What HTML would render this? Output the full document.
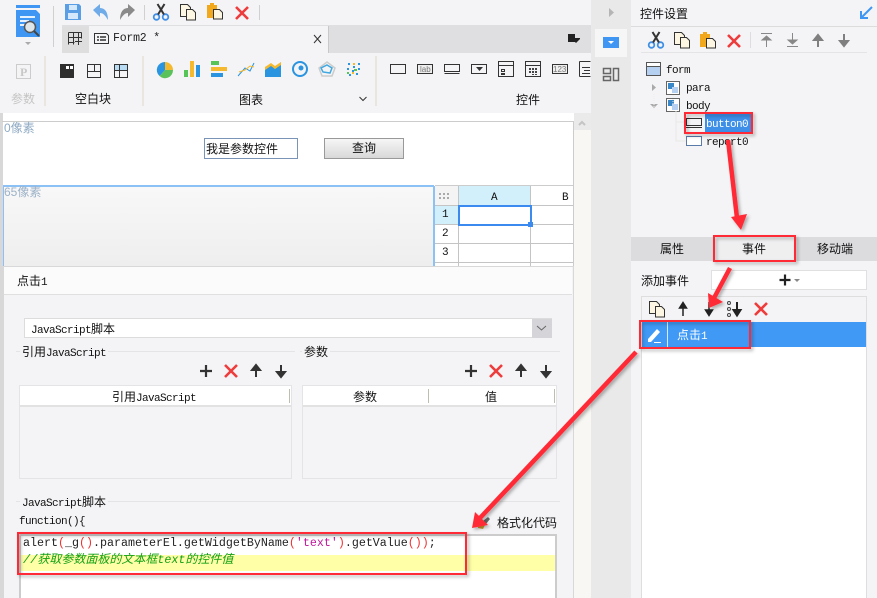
<!DOCTYPE html>
<html lang="zh"><head><meta charset="utf-8"><title>Form2</title>
<style>
html,body{margin:0;padding:0;background:#f4f4f6}
#p{position:relative;width:877px;height:598px;overflow:hidden;background:#f4f4f6;font:12px/16px "Liberation Sans","Noto Sans CJK SC",sans-serif;color:#111}
#p div{position:absolute}
.t{white-space:nowrap}
.m{font-family:"Liberation Mono","Noto Sans CJK SC",monospace;font-size:11px;letter-spacing:-.6px}
svg{position:absolute;left:0;top:0}
</style></head><body><div id="p">

<!-- backgrounds -->
<div style="left:62px;top:25px;width:529px;height:28px;background:#dfdfe1"></div>
<div style="left:62px;top:27px;width:27px;height:26px;background:#dedede"></div>
<div style="left:89px;top:26px;width:239px;height:27px;background:#f4f4f6;border-right:1px solid #c8c8c8"></div>
<div style="left:0;top:113px;width:574px;height:485px;background:#fff"></div>
<div style="left:0;top:113px;width:3px;height:485px;background:#d8d8d8"></div>
<div style="left:2px;top:121px;width:572px;height:1px;background:#ccc"></div>
<div style="left:573px;top:121px;width:1px;height:477px;background:#ccc"></div>
<div style="left:574px;top:113px;width:17px;height:485px;background:#f8f7f3"></div>
<div style="left:574px;top:113px;width:17px;height:17px;background:#eaeaea"></div>
<div style="left:591px;top:0;width:40px;height:598px;background:#e9e9e9"></div>
<div style="left:595px;top:29px;width:32px;height:28px;background:#f6f6f6"></div>
<div style="left:603px;top:37px;width:16px;height:11px;background:#3f97f3"></div>

<!-- canvas -->
<div style="left:3px;top:185px;width:431px;height:2px;background:#8cc1f6"></div>
<div style="left:3px;top:187px;width:1px;height:79px;background:#8cc1f6"></div>
<div style="left:4px;top:187px;width:429px;height:79px;background:linear-gradient(#f8f8f8,#eee)"></div>
<div style="left:433px;top:186px;width:2px;height:80px;background:#8cc1f6"></div>
<div class="t" style="left:4px;top:120px;color:#8faac4">0像素</div>
<div class="t" style="left:4px;top:184px;color:#9db2c8">65像素</div>
<div style="left:204px;top:138px;width:92px;height:19px;border:1px solid #7a94b8;background:#fff"></div>
<div class="t" style="left:206px;top:141px">我是参数控件</div>
<div style="left:324px;top:138px;width:78px;height:19px;border:1px solid #999;background:linear-gradient(#f6f6f6,#d8d8d8)"></div>
<div class="t" style="left:352px;top:140px">查询</div>

<!-- grid -->
<div style="left:435px;top:186px;width:138px;height:80px;background:#fff"></div>
<div style="left:435px;top:186px;width:23px;height:19px;background:#f4f4f5"></div>
<div style="left:458px;top:186px;width:72px;height:19px;background:#d2f0fb"></div>
<div style="left:435px;top:206px;width:23px;height:18px;background:#d2f0fb"></div>
<div style="left:435px;top:205px;width:138px;height:1px;background:#c4c4c4"></div>
<div style="left:435px;top:224px;width:138px;height:1px;background:#c4c4c4"></div>
<div style="left:435px;top:243px;width:138px;height:1px;background:#c4c4c4"></div>
<div style="left:435px;top:262px;width:138px;height:1px;background:#c4c4c4"></div>
<div style="left:435px;top:185px;width:138px;height:1px;background:#ccc"></div>
<div style="left:458px;top:186px;width:1px;height:80px;background:#c4c4c4"></div>
<div style="left:530px;top:186px;width:1px;height:80px;background:#c4c4c4"></div>
<div style="left:458px;top:205px;width:70px;height:17px;border:2px solid #3a8af0"></div>
<div style="left:528px;top:222px;width:5px;height:5px;background:#3a8af0"></div>
<div class="t m" style="left:491px;top:190px">A</div>
<div class="t m" style="left:562px;top:190px">B</div>
<div class="t m" style="left:442px;top:207px">1</div>
<div class="t m" style="left:442px;top:226px">2</div>
<div class="t m" style="left:442px;top:245px">3</div>

<!-- dialog -->
<div style="left:3px;top:266px;width:569px;height:332px;background:#f4f4f6;border:1px solid #d8d8d8;border-width:1px 1px 0 1px"></div>
<div style="left:4px;top:267px;width:568px;height:27px;background:#fbfbfb;border-bottom:1px solid #e0e0e0"></div>
<div class="t" style="left:17px;top:273px">点击<span class="m">1</span></div>
<div style="left:24px;top:318px;width:526px;height:18px;background:#fff;border:1px solid #dcdcdc"></div>
<div style="left:532px;top:319px;width:20px;height:19px;background:#d5d5d9"></div>
<div class="t" style="left:31px;top:321px"><span class="m">JavaScript</span>脚本</div>
<div style="left:16px;top:351px;width:279px;height:1px;background:#e4e4e6"></div>
<div style="left:300px;top:351px;width:260px;height:1px;background:#e4e4e6"></div>
<div class="t" style="left:20px;top:344px;background:#f4f4f6;padding:0 2px">引用<span class="m">JavaScript</span></div>
<div class="t" style="left:302px;top:344px;background:#f4f4f6;padding:0 2px">参数</div>

<div style="left:19px;top:385px;width:271px;height:92px;border:1px solid #e4e4e6"></div>
<div style="left:20px;top:386px;width:271px;height:19px;background:#fff"></div>
<div style="left:20px;top:405px;width:271px;height:2px;background:#e2e2e2"></div>
<div style="left:289px;top:389px;width:1px;height:14px;background:#bdbdb0"></div>
<div class="t" style="left:112px;top:389px">引用<span class="m">JavaScript</span></div>
<div style="left:302px;top:385px;width:253px;height:92px;border:1px solid #e4e4e6"></div>
<div style="left:303px;top:386px;width:253px;height:19px;background:#fff"></div>
<div style="left:303px;top:405px;width:253px;height:2px;background:#e2e2e2"></div>
<div style="left:428px;top:389px;width:1px;height:14px;background:#bdbdb0"></div>
<div style="left:554px;top:389px;width:1px;height:14px;background:#bdbdb0"></div>
<div class="t" style="left:353px;top:389px">参数</div>
<div class="t" style="left:485px;top:389px">值</div>

<div style="left:16px;top:501px;width:544px;height:1px;background:#e4e4e6"></div>
<div class="t" style="left:20px;top:494px;background:#f4f4f6;padding:0 2px"><span class="m">JavaScript</span>脚本</div>
<div class="t m" style="left:19px;top:514px">function(){</div>
<div class="t" style="left:497px;top:515px">格式化代码</div>
<div style="left:19px;top:534px;width:534px;height:70px;border:2px solid #ccc;background:#fff"></div>
<div style="left:21px;top:555px;width:534px;height:16px;background:#ffffa8"></div>
<div class="t" style="left:23px;top:536px;font:11.67px/15px 'Liberation Mono',monospace;color:#222">alert<span style="color:#e33">(</span>_g<span style="color:#e33">()</span>.parameterEl.getWidgetByName<span style="color:#e33">(</span><span style="color:#c0189c">'text'</span><span style="color:#e33">)</span>.getValue<span style="color:#e33">())</span>;</div>
<div class="t" style="left:23px;top:552px;color:#12a012;font-style:italic;font-family:'Liberation Mono','Noto Sans CJK SC',monospace;font-size:12px">//获取参数面板的文本框<span style="font-size:11.67px">text</span>的控件值</div>

<!-- top ribbon labels -->
<div class="t" style="left:113px;top:31px;font:11.500px/16px 'Liberation Mono',monospace;letter-spacing:-.2px;color:#222">Form2 *</div>
<div class="t" style="left:11px;top:91px;color:#c4c4c4">参数</div>
<div class="t" style="left:75px;top:91px">空白块</div>
<div class="t" style="left:239px;top:92px">图表</div>
<div class="t" style="left:516px;top:92px">控件</div>

<!-- right panel -->
<div class="t" style="left:640px;top:6px">控件设置</div>
<div style="left:631px;top:26px;width:246px;height:1px;background:#dcdcdc"></div>
<div style="left:641px;top:52px;width:226px;height:1px;background:#e4e4e6"></div>
<div style="left:705px;top:114px;width:46px;height:18px;background:#3d8fe8"></div>
<div class="t m" style="left:666px;top:63px">form</div>
<div class="t m" style="left:686px;top:81px">para</div>
<div class="t m" style="left:686px;top:99px">body</div>
<div class="t m" style="left:706px;top:117px;color:#fff">button0</div>
<div class="t m" style="left:706px;top:135px">report0</div>

<div style="left:631px;top:237px;width:246px;height:24px;background:#dcdcde"></div>
<div style="left:714px;top:236px;width:81px;height:25px;background:#efeff0"></div>
<div class="t" style="left:660px;top:241px">属性</div>
<div class="t" style="left:742px;top:241px">事件</div>
<div class="t" style="left:817px;top:241px">移动端</div>
<div class="t" style="left:641px;top:273px">添加事件</div>
<div style="left:711px;top:270px;width:154px;height:18px;background:#fff;border:1px solid #e0e0e0"></div>
<div style="left:641px;top:296px;width:224px;height:302px;background:#fff;border:1px solid #dedede"></div>
<div style="left:642px;top:297px;width:224px;height:25px;background:#f4f4f6"></div>
<div style="left:642px;top:322px;width:224px;height:25px;background:#4099f5"></div>
<div style="left:667px;top:322px;width:1px;height:25px;background:#d6e9fd"></div>
<div class="t" style="left:677px;top:327px;color:#fff">点击<span class="m">1</span></div>

<!-- icons -->
<svg width="877" height="598" viewBox="0 0 877 598" fill="none">
<defs>
<g id="cut"><circle cx="3.5" cy="13" r="2.800" stroke="#3f8fe6" stroke-width="1.800"/><circle cx="12.5" cy="13" r="2.800" stroke="#3f8fe6" stroke-width="1.800"/><path d="M5 10.500L11.500 0M11 10.500L4.500 0" stroke="#333" stroke-width="2"/></g>
<g id="copy"><path d="M.5.500h7l3 3v9h-10z" fill="#fdf6e3" stroke="#333"/><path d="M6.500 5.500h6l3 3v7.500h-9z" fill="#fdf6e3" stroke="#333"/></g>
<g id="paste"><path d="M0 2h10v13H0z" fill="#f2a81d"/><path d="M3 0h4v3H3z" fill="#f2a81d"/><path d="M6.500 6.500h6l3 3v6.500h-9z" fill="#fdf6e3" stroke="#333"/></g>
<path id="x" d="M1 1L13 13M13 1L1 13" stroke="#ee3c3c" stroke-width="2.600"/>
<path id="up" d="M5 13V4M1 6L5 1L9 6z" stroke="#333" stroke-width="2" fill="#333"/>
<path id="dn" d="M5 0V9M1 7L5 12L9 7z" stroke="#333" stroke-width="2" fill="#333"/>
<path id="plus" d="M0 6H12M6 0V12" stroke="#333" stroke-width="2.200"/>
<g id="cb"><rect x=".5" y=".5" width="13" height="13" stroke="#666" fill="#fff"/><rect x="2" y="2" width="6" height="6" fill="#3a87c8"/><rect x="6" y="6" width="6" height="6" fill="#b5d0f0"/></g>
</defs>

<!-- logo -->
<path d="M16 5H40V8H16z" fill="#3f97f3"/><path d="M16 10H36L40 14V37H16z" fill="#3f97f3"/>
<path d="M20 17h15M20 21h9M20 25h5" stroke="#e6f1ff" stroke-width="2"/>
<circle cx="30" cy="27" r="5.500" fill="#dfe6ea" stroke="#555" stroke-width="1.500"/><path d="M34 31L39 36" stroke="#444" stroke-width="2"/>
<path d="M25 42h6l-3 3z" fill="#aaa"/>
<path d="M53.500 6V47M144.500 5V20M259.500 5V20" stroke="#d0d0d0"/>
<!-- save -->
<path d="M65 4H79L81 6V20H65z" fill="#5a9fe6"/><path d="M69 5h8v5h-8zM68 13h10v6H68z" fill="#d6e8fb"/>
<!-- undo / redo -->
<path d="M93 10L100 4V8C105 8 108 12 108 20C105 15 103 13 100 13V17z" fill="#6fabe8"/>
<path d="M135 10L128 4V8C123 8 120 12 120 20C123 15 125 13 128 13V17z" fill="#8a8a8a"/>
<use href="#cut" x="153" y="4"/><use href="#copy" x="180" y="4"/><use href="#paste" x="207" y="3"/><use href="#x" x="235" y="6"/>
<!-- tab icons -->
<path d="M68.500 32.500h13M68.500 37.500h13M68.500 42.500h6M68.500 32.500v12M73.500 32.500v12M78.500 32.500v6M81.500 32.500v6M75 41.500h7M78.500 38v7" stroke="#333"/>
<path d="M94.500 33.500h12l2 2v8h-14z" fill="#f4f4f6" stroke="#333"/><path d="M97 37h2M100 37h6M97 40h2M100 40h6" stroke="#333" stroke-width="1.500"/>
<path d="M314 35L321 43M321 35L314 43" stroke="#333"/>
<path d="M568 34h7v4h5v1h-5v3h-7z" fill="#222"/><path d="M572 39h8l-4 4z" fill="#222"/>
<!-- ribbon separators -->
<path d="M45 56V106M143 56V106M376 56V106" stroke="#e8e6df" stroke-width="2"/>
<!-- P -->
<rect x="16.500" y="64.500" width="14" height="14" stroke="#ccc" fill="#f4f4f6"/><text x="20" y="76" font-family="Liberation Serif" font-weight="bold" font-size="12" fill="#c8c8c8">P</text>
<!-- blocks -->
<rect x="60" y="64" width="14" height="14" fill="#2e2e2e"/><path d="M66 66h3v3h-3zM70 66h3v3h-3z" fill="#fff"/>
<path d="M87.500 64.500h13v13h-13zM87.500 71.500h13M94.500 64.500v7" stroke="#333"/>
<rect x="115" y="65" width="13" height="5" fill="#b8dcf4"/><path d="M114.500 64.500h13v13h-13zM114.500 70.500h13M119.500 64.500v13" stroke="#333"/>
<!-- charts -->
<path d="M165 62a8 8 0 0 1 8 8h-8z" fill="#f4b92e"/><path d="M165 70h8a8 8 0 0 1-13.500 6z" fill="#5bc15b"/><path d="M165 62v8l-5.500 6A8 8 0 0 1 165 62z" fill="#2a94e0"/>
<path d="M184 70h4v7h-4z" fill="#57c457"/><path d="M190 61h4v16h-4z" fill="#f4b92e"/><path d="M196 65h4v12h-4z" fill="#2a94e0"/>
<path d="M211 61h8v4h-8z" fill="#57c457"/><path d="M211 67h16v4h-16z" fill="#f4b92e"/><path d="M211 73h12v4h-12z" fill="#2a94e0"/>
<path d="M238 76L245 68L250 71L254 63" stroke="#2a94e0"/><path d="M239 72L245 70L250 66L254 67" stroke="#f4b92e"/>
<path d="M265 67L271 65L275 69L281 62V77H265z" fill="#2a94e0"/><path d="M265 67L271 63L275 66L281 62V65L275 69L271 66L265 70z" fill="#f4b92e"/>
<circle cx="300" cy="69" r="7" stroke="#2a94e0" stroke-width="2"/><circle cx="301" cy="68" r="2.500" fill="#2a94e0"/>
<path d="M327 62L335 68L332 76H322L319 68z" stroke="#ccc" stroke-width="1.500"/><path d="M327 65L332 68L330 73L323 72L321 68z" stroke="#41a8e0" stroke-width="1.500"/>
<path d="M348 63h2v2h-2zM353 66h2v2h-2zM358 63h2v2h-2zM347 68h2v2h-2zM358 68h2v2h-2zM349 74h2v2h-2zM356 73h2v2h-2zM352 70h2v2h-2z" fill="#2a94e0"/>
<path d="M353 63h2v2h-2zM352 72h2v2h-2z" fill="#f4b92e"/><path d="M354 69h3v2h-3zM347 72h2v2h-2z" fill="#57c457"/>
<path d="M359.500 97l3.500 3.500 3.500-3.500" stroke="#333"/>
<!-- widgets -->
<g stroke="#333">
<rect x="390.500" y="64.500" width="15" height="9"/>
<rect x="417.500" y="64.500" width="15" height="9" fill="#eee"/>
<path d="M444.500 64.500h15v7h-15zM444.500 73.500h15"/>
<rect x="471.500" y="64.500" width="15" height="9"/>
<path d="M498.500 61.500h15v15h-15zM498.500 65.500h15M501.500 69.500h3v2h-3zM501.500 73.500h3v1h-3z"/>
<path d="M525.500 61.500h15v15h-15zM525.500 65.500h15"/>
<rect x="552.500" y="64.500" width="15" height="9" fill="#eee"/>
<path d="M579.500 61.500h11M579.500 76.500h11M579.500 61.500v15M582 67.500h8M584 70.500h6M582 73.500h8"/>
</g>
<path d="M476 67h7l-3.500 4z" fill="#333"/>
<path d="M529 68h2v2h-2zM532 68h2v2h-2zM535 68h2v2h-2zM529 71h2v2h-2zM532 71h2v2h-2zM535 71h2v2h-2zM532 74h2v1h-2zM535 74h2v1h-2z" fill="#444"/>
<text x="420" y="72" font-family="Liberation Sans" font-size="8" fill="#777">lab</text>
<text x="553" y="72" font-family="Liberation Sans" font-size="8" fill="#777">123</text>
<!-- grid corner -->
<path d="M439 193h2v2h-2zM443 193h2v2h-2zM447 193h2v2h-2zM439 197h2v2h-2zM443 197h2v2h-2zM447 197h2v2h-2z" fill="#aaa"/>
<!-- sidebar -->
<path d="M609 8l5 4.500-5 4.500z" fill="#b5b5b5"/><path d="M608 41h6l-3 3z" fill="#fff"/>
<path d="M603.500 68.500h7v5h-7zM603.500 76.500h7v4h-7zM613.500 68.500h5v12h-5z" stroke="#666" stroke-width="1.500"/>
<!-- scroll arrow -->
<path d="M579 125l3-3 3 3" stroke="#c4c4c4" stroke-width="2"/>
<!-- right top -->
<path d="M872 7L862 17M861 11V18H868" stroke="#3f97f3" stroke-width="2"/>
<use href="#cut" x="648" y="32"/><use href="#copy" x="674" y="32"/><use href="#paste" x="700" y="32"/><use href="#x" x="727" y="34"/>
<path d="M750.500 32V48" stroke="#ddd"/>
<path d="M761 33.500h11M766.500 47V38M762 40l4.500-4 4.500 4z" stroke="#888" fill="#888"/>
<path d="M787 46.500h11M792.500 33V42M788 40l4.500 4 4.500-4z" stroke="#888" fill="#888"/>
<use href="#up" x="813" y="34" opacity=".6"/><use href="#dn" x="839" y="34" opacity=".6"/>
<!-- tree -->
<rect x="646.500" y="62.500" width="14" height="13" stroke="#555" fill="#fff"/><rect x="647" y="67" width="13" height="8" fill="#b5d0f0"/><path d="M647 66.500h13" stroke="#555"/>
<use href="#cb" x="666" y="81"/><use href="#cb" x="666" y="98"/>
<path d="M652 84l4 3.500-4 3.500z" fill="#aaa"/><path d="M650 104h8l-4 4z" fill="#aaa"/>
<path d="M673 95V105M654 94V110" stroke="#eee" stroke-dasharray="1 1"/>
<path d="M676 111v30h10M676 122h10" stroke="#e8e8e8"/>
<path d="M686.500 118.500h15v7h-15zM686 127.500h16" stroke="#333"/>
<rect x="686.500" y="136.500" width="15" height="9" stroke="#5a7ba8" fill="#fff"/>
<!-- dialog icons -->
<path d="M537 326l4.500 4 4.500-4" stroke="#666"/>
<use href="#plus" x="200" y="365"/><use href="#x" x="224" y="364"/><use href="#up" x="251" y="364"/><use href="#dn" x="276" y="365"/>
<use href="#plus" x="465" y="365"/><use href="#x" x="489" y="364"/><use href="#up" x="516" y="364"/><use href="#dn" x="541" y="365"/>
<!-- brush -->
<path d="M483 521l5-4 2 2-4 5z" fill="#666"/><path d="M478 523l5-2 2 4-2 4-5-1z" fill="#d99a2b"/>
<!-- right list icons -->
<path d="M785 274.500v11M779.500 280h11" stroke="#222" stroke-width="2.200"/><path d="M794 279h6l-3 3z" fill="#888"/>
<use href="#copy" x="649" y="301"/>
<path d="M683 316V306M679.500 308L683 302.500L686.500 308z" stroke="#222" stroke-width="1.500" fill="#222"/>
<path d="M709 302V312M705.500 310L709 315.500L712.500 310z" stroke="#222" stroke-width="1.500" fill="#222"/>
<circle cx="729" cy="303" r="1.500" stroke="#444"/><circle cx="729" cy="309" r="1.500" stroke="#444"/><circle cx="729" cy="315" r="1.500" stroke="#444"/>
<path d="M737 302V312M733.500 310L737 315.500L740.500 310z" stroke="#222" stroke-width="2" fill="#222"/>
<use href="#x" x="754" y="302"/>
<path d="M648 339L657 329L660 332L651 342H648z" fill="#fff"/><path d="M654 342.500H661" stroke="#fff"/>

<!-- red annotations -->
<g filter="url(#s)" stroke="#ff2a35">
<rect x="685" y="113" width="67" height="20" stroke-width="2"/>
<rect x="714" y="236" width="81" height="25" stroke-width="2"/>
<rect x="640" y="321" width="110" height="27" stroke-width="2"/>
<rect x="18" y="533" width="448" height="41" stroke-width="2"/>
<path d="M728 140L737 218" stroke-width="4.500"/><path d="M731 217L747 214L741 230z" fill="#ff2a35" stroke="none"/>
<path d="M730 268L714 298" stroke-width="4.500"/><path d="M708 293L723 302L709 308z" fill="#ff2a35" stroke="none"/>
<path d="M636 352L480 518" stroke-width="4.500"/><path d="M475 512L488 525L472 528z" fill="#ff2a35" stroke="none"/>
</g>
<filter id="s" x="-5%" y="-5%" width="110%" height="110%"><feDropShadow dx="2" dy="2" stdDeviation="1.500" flood-color="#000" flood-opacity=".3"/></filter>
</svg>
</div></body></html>
